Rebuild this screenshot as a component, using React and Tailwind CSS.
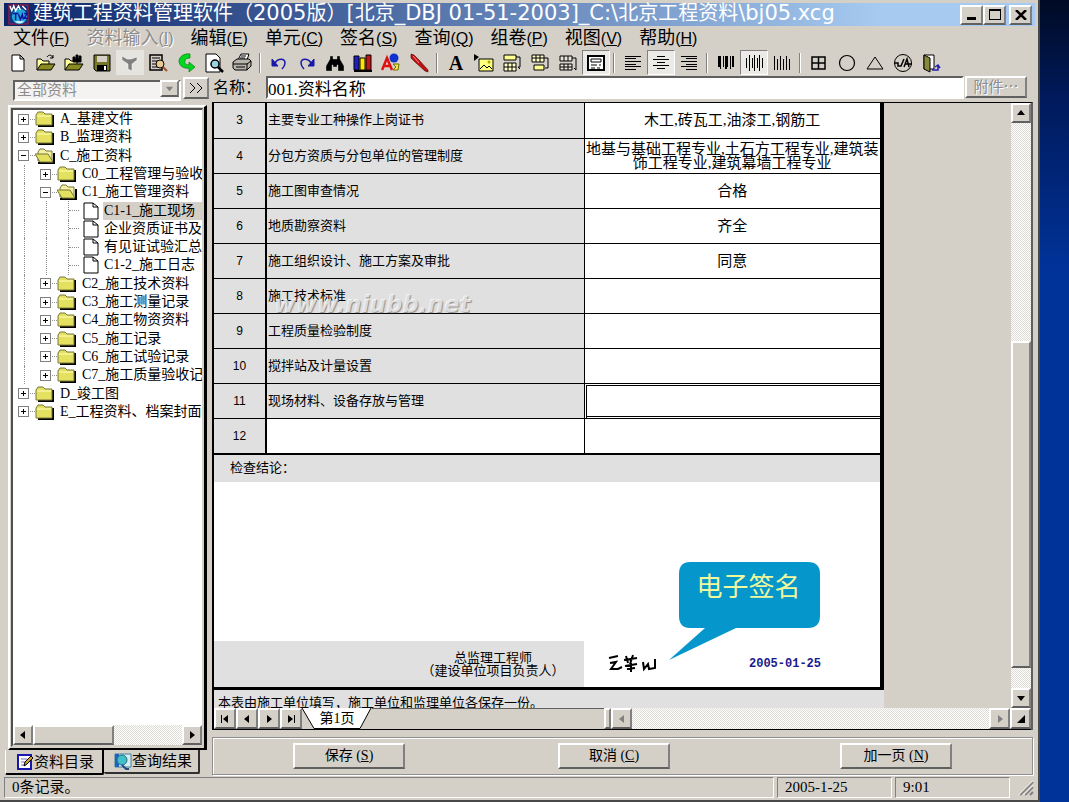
import React, { useState } from "react";
import clsx from "clsx";

const raised =
  "border-2 border-t-white border-l-white border-r-[#808080] border-b-[#606060] bg-[#d4d0c8]";
const track =
  "bg-[repeating-conic-gradient(#ffffff_0_25%,#dedbd4_0_50%)] bg-[length:2px_2px]";

const menus = [
  { label: "文件", mnemonic: "F" },
  { label: "资料输入", mnemonic: "I", disabled: true },
  { label: "编辑", mnemonic: "E" },
  { label: "单元", mnemonic: "C" },
  { label: "签名", mnemonic: "S" },
  { label: "查询", mnemonic: "Q" },
  { label: "组卷", mnemonic: "P" },
  { label: "视图", mnemonic: "V" },
  { label: "帮助", mnemonic: "H" },
];

const bars = (x, y, w, h) => <rect key={`${x}-${y}`} x={x} y={y} width={w} height={h} fill="#000" />;

const icons = {
  new: <path d="M4 2h8l4 4v12H4zM12 2v4h4" fill="#fff" stroke="#000" />,
  open: (
    <g stroke="#000">
      <path d="M1 17V6h4l2 2h6v3" fill="#ffff9c" />
      <path d="M1 17l4-6h14l-4 6z" fill="#8a8a22" />
      <path d="M11 4c2-3 5-2 6 1M17 2v3h-3" fill="none" />
    </g>
  ),
  openFind: (
    <g stroke="#000">
      <path d="M1 17V6h4l2 2h6v3" fill="#ffff9c" />
      <path d="M1 17l4-6h14l-4 6z" fill="#8a8a22" />
      <path d="M9 9V4h2v2h1V2h2v4h1V3h2v6z" fill="#000" />
    </g>
  ),
  save: (
    <g>
      <path d="M2 2h16v16H4l-2-2z" fill="#77772a" stroke="#000" />
      <path d="M5 3h10v6H5z" fill="#d4d0c8" />
      <path d="M5 12h10v6H5z" fill="#000" />
      <path d="M12 13h2v4h-2z" fill="#fff" />
    </g>
  ),
  filter: <path d="M2 3l5 3h4l6-2v3l-5 4v7l-4-2v-5L2 7z" fill="#808080" stroke="#fff" strokeWidth="0.5" />,
  preview: (
    <g>
      <path d="M2 2h12v15H2z" fill="#d4d0c8" stroke="#000" strokeWidth="1.500" />
      <path d="M4 5h8M4 8h6M4 11h5M4 14h6" stroke="#000" />
      <circle cx="12" cy="11" r="4" fill="#e8c890" stroke="#000" />
      <path d="M15 14l4 4" stroke="#a05020" strokeWidth="2" />
    </g>
  ),
  refresh: (
    <path
      d="M14 1C8 0 3 4 3 8c0 5 5 8 10 7v4l6-5-6-5v3c-3 0-5-2-4-4 0-2 2-3 5-3z"
      fill="#00d820"
      stroke="#067a10"
      strokeWidth="0.7"
    />
  ),
  printPreview: (
    <g>
      <path d="M2 1h10l4 4v14H2z" fill="#fff" stroke="#000" />
      <circle cx="11" cy="11" r="4" fill="#9ad4e0" stroke="#000" strokeWidth="1.5" />
      <path d="M14 14l5 5" stroke="#000" strokeWidth="2.5" />
    </g>
  ),
  print: (
    <g stroke="#000">
      <path d="M6 7l3-6h8l-2 6z" fill="#fff" />
      <path d="M1 9l4-3h12l2 2v5l-4 4H3l-2-2z" fill="#b8b4ac" />
      <path d="M1 11h14l4-3M4 14h9M15 11v6M9 3h5M8 5h5" fill="none" />
    </g>
  ),
  undo: (
    <g>
      <path d="M3 6v7h6z" fill="#1818a8" stroke="#1818a8" />
      <path d="M6 10c3-5 10-5 10 0 0 3-2 5-3 6" fill="none" stroke="#1818a8" strokeWidth="1.5" />
    </g>
  ),
  redo: (
    <g>
      <path d="M17 6v7h-6z" fill="#1818a8" stroke="#1818a8" />
      <path d="M14 10C11 5 4 5 4 10c0 3 2 5 3 6" fill="none" stroke="#1818a8" strokeWidth="1.5" />
    </g>
  ),
  find: <path d="M5 3h3v3h4V3h3v3l4 7v5h-6v-6h-1v2H8v-2H7v6H1v-5l4-7z" fill="#000" stroke="#d4d0c8" strokeWidth="0.4" />,
  books: (
    <g stroke="#000">
      <path d="M1 3h5v14H1z" fill="#2020c0" />
      <path d="M7 5h5v12H7z" fill="#ffe800" />
      <path d="M13 2h5v15h-5z" fill="#c01818" />
      <path d="M1 18h18" strokeWidth="2" />
    </g>
  ),
  shapes: (
    <g>
      <circle cx="13" cy="5" r="4.5" fill="#1030d0" />
      <path d="M1 17L6 5l5 12M3 13h6" fill="none" stroke="#e01010" strokeWidth="2.5" />
      <path d="M12 11h6l-1 6h-5l3-3z" fill="#f0e850" stroke="#707000" />
    </g>
  ),
  pen: (
    <g>
      <path d="M2 1l3 1 5 5 9 10v2l-3-1L6 9 2 5z" fill="#c01010" stroke="#500" strokeWidth="0.6" />
      <path d="M4 3l6 7" stroke="#ff9090" />
    </g>
  ),
  picture: (
    <g>
      <path d="M0 1v7l5-4z" fill="#000" />
      <path d="M5 6h14v12H5z" fill="#ffff80" stroke="#000" />
      <path d="M6 16l4-4 3 3 2-2 3 3" fill="none" stroke="#000" />
      <circle cx="15" cy="9" r="1.5" fill="#b8a000" />
    </g>
  ),
  rowInsert: (
    <g stroke="#000">
      <path d="M2 2h12v5H2z" fill="#ffff90" />
      <path d="M2 10h12v8H2zM2 14h12M6 10v8M10 10v8" fill="#ffffc8" />
      <path d="M14 4h4v10h-2l2 2" fill="none" />
    </g>
  ),
  rowAppend: (
    <g stroke="#000">
      <path d="M2 2h12v7H2zM2 5h12M6 2v7M10 2v7" fill="#ffffc8" />
      <path d="M4 12h10v5H4z" fill="#ffff90" />
      <path d="M14 5h4v10h-3" fill="none" />
    </g>
  ),
  rowDelete: (
    <g stroke="#000">
      <path d="M2 3h12v5H2zM6 3v5M10 3v5M2 11h12v6H2zM6 11v6M10 11v6M2 14h12" fill="#e8e4dc" />
      <path d="M14 5h4v12l-2-2" fill="none" />
    </g>
  ),
  form: (
    <g>
      <path d="M2 3h16v14H2z" fill="#fff" stroke="#000" strokeWidth="2" />
      <path d="M5 6h10v3H5zM5 12h6M13 12h2M5 15h4M11 15h3" fill="none" stroke="#000" />
    </g>
  ),
  left: <g>{[3, 5, 8, 11, 13, 16].map((y, i) => bars(2, y, i % 2 ? 11 : 16, 1))}</g>,
  center: <g>{[3, 6, 9, 12, 15].map((y, i) => bars(i % 2 ? 2 : 6, y, i % 2 ? 16 : 8, 1))}</g>,
  right: <g>{[3, 5, 8, 11, 13, 16].map((y, i) => bars(i % 2 ? 7 : 2, y, i % 2 ? 11 : 16, 1))}</g>,
  barTop: <g>{[2, 4, 7, 9, 11, 14, 16].map((x, i) => bars(x, 3, i % 3 ? 1 : 2, i % 2 ? 13 : 11))}</g>,
  barMiddle: <g>{[2, 5, 8, 10, 13, 15, 18].map((x, i) => bars(x, i % 2 ? 2 : 5, 1, i % 2 ? 16 : 10))}</g>,
  barBottom: <g>{[2, 5, 8, 11, 14, 17].map((x, i) => bars(x, i % 2 ? 6 : 3, 1, i % 2 ? 11 : 14))}</g>,
  grid: <path d="M3 4h13v12H3zM3 10h13M9.500 4v12" fill="none" stroke="#000" strokeWidth="1.500" />,
  circle: <circle cx="10" cy="10" r="7.500" fill="none" stroke="#000" strokeWidth="1.200" />,
  triangle: <path d="M10 4l8 12H2z" fill="none" stroke="#000" />,
  signal: (
    <g fill="none" stroke="#000">
      <circle cx="10" cy="10" r="8.500" />
      <path d="M1 10h4v3h3l3-7M11 14l3-8 2 8M12 11h7" strokeWidth="1.500" />
    </g>
  ),
  exit: (
    <g>
      <path d="M3 2h10v14H3z" fill="#fff" stroke="#000" />
      <path d="M3 2l6 3v14l-6-3z" fill="#88883a" stroke="#000" />
      <path d="M11 17h6v-4M14 14l3-2 2 3" fill="none" stroke="#2020b0" strokeWidth="1.500" />
    </g>
  ),
};

const toolGroups = [
  [
    ["new", "新建"],
    ["open", "打开"],
    ["openFind", "查找文件"],
    ["save", "存盘"],
    ["filter", "筛选", "disabled"],
    ["preview", "查看"],
    ["refresh", "刷新"],
    ["printPreview", "打印预览"],
    ["print", "打印"],
  ],
  [
    ["undo", "撤消"],
    ["redo", "重做"],
    ["find", "查找"],
    ["books", "资料库"],
    ["shapes", "图形"],
    ["pen", "画笔"],
  ],
  [
    ["font", "字体"],
    ["picture", "图片"],
    ["rowInsert", "插入行"],
    ["rowAppend", "追加行"],
    ["rowDelete", "删除行"],
    ["form", "表格", "pressed"],
  ],
  [
    ["left", "左对齐"],
    ["center", "居中", "pressed"],
    ["right", "右对齐"],
  ],
  [
    ["barTop", "上对齐"],
    ["barMiddle", "垂直居中", "pressed"],
    ["barBottom", "下对齐"],
  ],
  [
    ["grid", "边框"],
    ["circle", "圆"],
    ["triangle", "三角"],
    ["signal", "符号"],
    ["exit", "退出"],
  ],
];

const treeItems = [
  { level: 0, icon: "folder", sign: "+", text: "A_基建文件" },
  { level: 0, icon: "folder", sign: "+", text: "B_监理资料" },
  { level: 0, icon: "opened", sign: "-", text: "C_施工资料" },
  { level: 1, icon: "folder", sign: "+", text: "C0_工程管理与验收" },
  { level: 1, icon: "opened", sign: "-", text: "C1_施工管理资料" },
  { level: 2, icon: "file", text: "C1-1_施工现场" },
  { level: 2, icon: "file", text: "企业资质证书及" },
  { level: 2, icon: "file", text: "有见证试验汇总" },
  { level: 2, icon: "file", text: "C1-2_施工日志" },
  { level: 1, icon: "folder", sign: "+", text: "C2_施工技术资料" },
  { level: 1, icon: "folder", sign: "+", text: "C3_施工测量记录" },
  { level: 1, icon: "folder", sign: "+", text: "C4_施工物资资料" },
  { level: 1, icon: "folder", sign: "+", text: "C5_施工记录" },
  { level: 1, icon: "folder", sign: "+", text: "C6_施工试验记录" },
  { level: 1, icon: "folder", sign: "+", text: "C7_施工质量验收记" },
  { level: 0, icon: "folder", sign: "+", text: "D_竣工图" },
  { level: 0, icon: "folder", sign: "+", text: "E_工程资料、档案封面" },
];

const rows = [
  { no: 3, name: "主要专业工种操作上岗证书", value: ["木工,砖瓦工,油漆工,钢筋工"] },
  {
    no: 4,
    name: "分包方资质与分包单位的管理制度",
    value: ["地基与基础工程专业,土石方工程专业,建筑装", "饰工程专业,建筑幕墙工程专业"],
  },
  { no: 5, name: "施工图审查情况", value: ["合格"] },
  { no: 6, name: "地质勘察资料", value: ["齐全"] },
  { no: 7, name: "施工组织设计、施工方案及审批", value: ["同意"] },
  { no: 8, name: "施工技术标准", value: [] },
  { no: 9, name: "工程质量检验制度", value: [] },
  { no: 10, name: "搅拌站及计量设置", value: [] },
  { no: 11, name: "现场材料、设备存放与管理", value: [] },
  { no: 12, name: "", value: [] },
];

const arrowPaths = {
  up: "M5 2l4 5H1z",
  down: "M1 3h8L5 8z",
  left: "M7 1v8L2 5z",
  right: "M3 1v8l5-4z",
  first: "M8 1v8L3 5zM1 1h1v8H1z",
  last: "M2 1v8l5-4zM8 1h1v8H8z",
  corner: "M9 1v8H1z",
};

const ArrowButton = ({ dir, label, className, disabled }) => (
  <button
    aria-label={label}
    disabled={disabled}
    className={clsx(raised, "flex items-center justify-center shrink-0", className)}
  >
    <svg viewBox="0 0 10 10" className={clsx("w-[10px] h-[10px]", disabled ? "fill-[#808080]" : "fill-black")}>
      <path d={arrowPaths[dir]} />
    </svg>
  </button>
);

const TitleBar = () => (
  <div className="flex items-center h-[23px] pl-1 pr-[3px] bg-[linear-gradient(to_right,#0a246a,#a6caf0_85%)]">
    <svg viewBox="0 0 22 22" className="w-[21px] h-[21px] shrink-0">
      <rect x="1" y="1" width="20" height="20" fill="#18307c" stroke="#c01830" />
      <circle cx="12" cy="13" r="8" fill="#20a8d8" />
      <path d="M2 2l2 5 2-5 2 5 3-5 2 4M15 2l4 4" fill="none" stroke="#fff" strokeWidth="1.500" />
      <path d="M5 10h6M8 10v7M11 11l2 5 2-5 1 5M17 10h3l-3 5h4" fill="none" stroke="#1010a0" strokeWidth="1.500" />
      <path d="M7 18c3 3 7 3 10 0z" fill="#e0f8ff" />
    </svg>
    <h1 className="flex-1 min-w-0 self-start pl-1 whitespace-nowrap overflow-x-clip text-white text-[20px] leading-[21px] font-['DejaVu_Sans','Noto_Sans_CJK_SC',sans-serif]">
      建筑工程资料管理软件（<span className="text-[21px]">2005</span>版）
      <span className="text-[21px]">[</span>北京
      <span className="text-[21px]">_DBJ 01-51-2003]_C:\</span>北京工程资料
      <span className="text-[21px]">\bj05.xcg</span>
    </h1>
    <div className="flex shrink-0">
      <button aria-label="最小化" className={clsx(raised, "w-[23px] h-[20px] flex items-end justify-center pb-[3px]")}>
        <span className="w-[9px] h-[3px] bg-black" />
      </button>
      <button aria-label="最大化" className={clsx(raised, "w-[23px] h-[20px] flex items-center justify-center")}>
        <span className="w-[12px] h-[11px] border border-t-2 border-black" />
      </button>
      <button aria-label="关闭" className={clsx(raised, "w-[23px] h-[20px] ml-[3px] flex items-center justify-center")}>
        <svg viewBox="0 0 12 10" className="w-[12px] h-[10px]">
          <path d="M1 0l10 10M11 0L1 10" stroke="#000" strokeWidth="2.500" />
        </svg>
      </button>
    </div>
  </div>
);

const MenuBar = () => (
  <nav className="flex items-center gap-[17px] h-[24px] pl-[9px]">
    {menus.map((m) => (
      <button
        key={m.mnemonic + m.label}
        disabled={m.disabled}
        className={clsx(
          "text-[18px] leading-[22px] whitespace-nowrap",
          m.disabled && "text-[#8c8c8c] [text-shadow:1px_1px_0_#fff]"
        )}
      >
        {m.label}
        <span className="text-[16px]">
          (<u>{m.mnemonic}</u>)
        </span>
      </button>
    ))}
  </nav>
);

const ToolBar = () => (
  <div className="flex items-center h-[25px]">
    {toolGroups.map((group, i) => (
      <div key={i} className="flex items-center">
        {i > 0 && <span className="w-[2px] h-[20px] ml-[3px] mr-1 bg-[#808080] border-r border-white" />}
        {group.map(([name, label, state]) => (
          <button
            key={name}
            title={label}
            aria-label={label}
            disabled={state === "disabled"}
            className={clsx(
              "w-[28px] h-[25px] flex items-center justify-center",
              state === "pressed" && "border border-t-[#808080] border-l-[#808080] border-r-white border-b-white bg-[#eceae6]",
              state === "disabled" && "bg-[#e6e4de]"
            )}
          >
            {name === "font" ? (
              <b className="text-[20px] leading-[20px] font-['Liberation_Serif',serif]">A</b>
            ) : (
              <svg viewBox="0 0 20 20" className="w-[20px] h-[20px]">
                {icons[name]}
              </svg>
            )}
          </button>
        ))}
      </div>
    ))}
  </div>
);

const NameRow = () => {
  const [name, setName] = useState("001.资料名称");
  return (
    <div className="flex items-start h-[27px] pt-px pl-[9px] pr-2 font-['Liberation_Serif','Noto_Sans_CJK_SC',sans-serif]">
      <div className="relative w-[168px] h-[21px] mt-[2px] shrink-0">
        <select
          aria-label="资料分类"
          disabled
          className="w-full h-full pl-[2px] appearance-none border-2 border-t-[#606060] border-l-[#606060] border-r-white border-b-white bg-[#f4f3f1] text-[#8c8c8c] text-[15px] leading-[17px] opacity-100"
        >
          <option>全部资料</option>
        </select>
        <span className={clsx(raised, "absolute right-[2px] top-[2px] w-[19px] h-[17px] flex items-center justify-center pointer-events-none")}>
          <svg viewBox="0 0 10 10" className="w-[9px] h-[9px] fill-[#808080]">
            <path d={arrowPaths.down} />
          </svg>
        </span>
      </div>
      <button aria-label="展开" className={clsx(raised, "w-[26px] h-[22px] mt-px ml-[2px] flex items-center justify-center shrink-0")}>
        <svg viewBox="0 0 14 12" className="w-[14px] h-[12px]">
          <path d="M1 1l5 5-5 5M8 1l5 5-5 5" fill="none" stroke="#000" />
        </svg>
      </button>
      <label htmlFor="doc-name" className="w-[57px] pl-1 shrink-0 text-[16px] leading-[24px] whitespace-nowrap">
        名称：
      </label>
      <input
        id="doc-name"
        value={name}
        onChange={(e) => setName(e.target.value)}
        className="flex-1 min-w-0 h-[23px] border-2 border-t-[#606060] border-l-[#606060] border-r-white border-b-white bg-white text-[17px] leading-[19px] outline-none"
      />
      <button disabled className={clsx(raised, "w-[62px] h-[22px] ml-px shrink-0 text-[15px] leading-[16px] text-[#8c8c8c] [text-shadow:1px_1px_0_#fff]")}>
        附件⋯
      </button>
    </div>
  );
};

const TreeIcon = ({ type }) => (
  <svg viewBox="0 0 20 18" className="w-[20px] h-[18px] shrink-0">
    {type === "folder" && (
      <g>
        <path d="M3 16h15V5" fill="none" stroke="#000" strokeWidth="2" />
        <path d="M1 15V5l2-3h5l2 2h7v11z" fill="#e4e060" stroke="#77773c" />
        <path d="M2 6h14" stroke="#ffffc0" />
      </g>
    )}
    {type === "opened" && (
      <g>
        <path d="M3 16h16V6" fill="none" stroke="#000" strokeWidth="2" />
        <path d="M3 14V5l2-3h4l2 2h6v11z" fill="#f4f0a0" stroke="#77773c" />
        <path d="M0 7h13l5 8H5z" fill="#e4e060" stroke="#77773c" />
      </g>
    )}
    {type === "file" && (
      <path d="M5 1h9l5 4v12H5zM14 1v4h5" fill="#fff" stroke="#000" />
    )}
  </svg>
);

const TreeRow = ({ item, selected }) => (
  <li className="flex items-center min-h-0">
    {Array.from({ length: item.level }).map((_, i) => (
      <span key={i} className="w-[22px] h-full flex justify-center shrink-0">
        <span className="h-full border-l border-dotted border-[#909090]" />
      </span>
    ))}
    {item.sign ? (
      <button aria-label={item.sign === "+" ? "展开" : "折叠"} className="w-[22px] flex justify-center shrink-0">
        <svg viewBox="0 0 22 11" className="w-[22px] h-[11px]">
          <path d="M17 5.500h5" stroke="#909090" strokeDasharray="1 1" />
          <rect x="5.500" y="0.500" width="10" height="10" fill="#fff" stroke="#808080" />
          <path d="M8 5.500h5" stroke="#000" />
          {item.sign === "+" && <path d="M10.500 3v5" stroke="#000" />}
        </svg>
      </button>
    ) : (
      <span className="w-[22px] h-full pl-[11px] shrink-0">
        <span className="flex items-center h-full border-l border-dotted border-[#909090]">
          <span className="w-full border-t border-dotted border-[#909090]" />
        </span>
      </span>
    )}
    <TreeIcon type={item.icon} />
    <span
      className={clsx(
        "ml-1 pl-px flex-1 text-[14px] leading-[18px] whitespace-nowrap",
        selected && "bg-[#d4d0c8]"
      )}
    >
      {item.text}
    </span>
  </li>
);

const Sidebar = () => (
  <aside className="w-[203px] shrink-0 flex flex-col pt-[3px] font-['Liberation_Serif','Noto_Sans_CJK_SC',sans-serif]">
    <div className="flex-1 flex flex-col ml-1 p-px border-t-2 border-l-2 border-t-white border-l-white border-r-[3px] border-b-2 border-r-black border-b-black">
      <div className="flex-1 flex flex-col border-2 border-r border-t-[#505050] border-l-[#505050] border-r-[#d4d0c8] border-b-[#d4d0c8] bg-white overflow-hidden">
        <ul className="grid auto-rows-fr h-[311px] overflow-hidden">
          {treeItems.map((item, i) => (
            <TreeRow key={item.text} item={item} selected={i === 5} />
          ))}
        </ul>
        <div className={clsx("flex h-[20px] mt-auto", track)}>
          <ArrowButton dir="left" label="向左滚动" className="w-[20px]" />
          <span className={clsx(raised, "w-[81px]")} />
          <ArrowButton dir="right" label="向右滚动" className="w-[20px] ml-auto" />
        </div>
      </div>
    </div>
    <div className="flex h-[26px] text-[15px] leading-[20px] pl-px">
      <button className="w-[99px] h-[25px] pl-[2px] flex items-center justify-center border-l border-l-white border-r-2 border-b-2 border-r-black border-b-black rounded-b-[2px]">
        <svg viewBox="0 0 18 18" className="w-[18px] h-[18px] shrink-0">
          <path d="M2 2h13v14H2z" fill="#fff" stroke="#1818b0" strokeWidth="2" />
          <path d="M5 6h6M5 9h4M5 12h5" stroke="#7070b0" />
          <path d="M8 13l1-4 6-6 2 2-6 6z" fill="#d0a030" stroke="#000" />
        </svg>
        资料目录
      </button>
      <button className="w-[96px] h-[24px] pl-1 flex items-center justify-center border-r-2 border-b-2 border-r-[#303030] border-b-[#303030] rounded-b-[2px]">
        <svg viewBox="0 0 18 18" className="w-[18px] h-[18px] shrink-0">
          <path d="M1 2h16v13H1z" fill="#d8ecf4" stroke="#4080a0" />
          <path d="M1 2h4v13H1z" fill="#2060c0" />
          <circle cx="8" cy="8" r="5" fill="#40c0c8" stroke="#207080" />
          <path d="M8 13l4 4h3" stroke="#205080" fill="none" strokeWidth="2" />
        </svg>
        查询结果
      </button>
    </div>
  </aside>
);

const Sheet = () => (
  <div className="flex-1 min-w-0 flex flex-col">
    <div className="flex-1 flex flex-col border-r-[4px] border-b-[3px] border-black bg-white">
      <table className="w-full table-fixed border-collapse text-[13px] leading-[16px]">
        <colgroup>
          <col className="w-[52px]" />
          <col className="w-[318px]" />
          <col />
        </colgroup>
        <tbody>
          {rows.map((row) => (
            <tr key={row.no} className="h-[35px] border-b border-black">
              <td className="border-r-2 border-black bg-[#e0e0e0] text-center text-[12px]">{row.no}</td>
              <td className={clsx("relative px-px border-r border-black", row.name && "bg-[#e0e0e0]")}>
                {row.name}
                {row.no === 8 && (
                  <span className="absolute left-[7px] top-[12px] text-[23px] leading-[26px] font-bold italic text-white/70 [text-shadow:1px_1px_1px_#909090] font-['DejaVu_Sans',sans-serif]">
                    www.niubb.net
                  </span>
                )}
              </td>
              <td
                className={clsx(
                  "text-center text-[15px] leading-[14px] whitespace-nowrap font-['Liberation_Serif','Noto_Sans_CJK_SC',sans-serif]",
                  row.no === 11 && "shadow-[inset_1px_1px_0_#fff,inset_2px_2px_0_#000,inset_0_-1px_0_#fff,inset_0_-2px_0_#000]"
                )}
              >
                {row.value.map((line) => (
                  <div key={line}>{line}</div>
                ))}
              </td>
            </tr>
          ))}
        </tbody>
      </table>

      {/* Conclusion */}
      <div className="h-[28px] pl-4 bg-[#e0e0e0] border-t border-black text-[13px] leading-[26px]">检查结论：</div>
      <div className="flex-1" />
      <div className="flex h-[46px]">
        <div className="w-[370px] shrink-0 flex flex-col justify-center bg-[#e0e0e0] pl-[188px] text-center text-[13px] leading-[13px] whitespace-nowrap">
          <div>总监理工程师</div>
          <div>（建设单位项目负责人）</div>
        </div>
        <div className="relative flex-1 flex items-center">
          <svg viewBox="0 0 52 22" className="w-[52px] h-[22px] ml-[23px]" aria-label="签名">
            <path
              d="M2 5l9-2M3 10l6-1 -5 7 7 0 4-2M17 7l13-2M19 3l2 7M26 2l-3 9M18 13l12-2M24 10v9M20 16l8-1M36 9l1 7 4-5 1 5 6-1V6"
              fill="none"
              stroke="#000"
              strokeWidth="2"
            />
          </svg>
          <span className="ml-[90px] text-[12px] font-bold text-[#1a1a8c] whitespace-nowrap font-['Liberation_Mono',monospace]">
            2005-01-25
          </span>
          <div className="absolute left-[84px] bottom-[26px] w-[154px] h-[101px]">
            <svg viewBox="0 0 154 101" className="absolute inset-0 w-full h-full">
              <path
                d="M22 2h118q12 0 12 12v42q0 12-12 12H68L1 100 37 68H22q-11 0-11-12V14Q11 2 22 2z"
                fill="#0597cb"
              />
            </svg>
            <div className="relative pl-[7px] pt-2 text-center text-[26px] leading-[38px] text-[#f0f89c]">电子签名</div>
          </div>
        </div>
      </div>
    </div>
    <div className="h-[18px] shrink-0 overflow-hidden bg-[#e0e0e0] pl-1 text-[13px] leading-[26px] whitespace-nowrap">
      本表由施工单位填写，施工单位和监理单位各保存一份。
    </div>
  </div>
);

const SheetTabs = () => (
  <div className="flex h-[22px] border-b border-black">
    <ArrowButton dir="first" label="第一页" className="w-[22px]" />
    <ArrowButton dir="left" label="上一页" className="w-[22px]" />
    <ArrowButton dir="right" label="下一页" className="w-[22px]" />
    <ArrowButton dir="last" label="最后一页" className="w-[22px]" />
    <button className="relative w-[70px] shrink-0 text-[14px] leading-[20px] font-['Liberation_Serif','Noto_Sans_CJK_SC',sans-serif]">
      <svg viewBox="0 0 70 21" className="absolute inset-0 w-full h-full">
        <path d="M0 0l12 20.500h46L69 0" fill="#fff" stroke="#000" />
      </svg>
      <span className="relative">第1页</span>
    </button>
    <span className="w-[232px] border-t border-[#606060]" />
    <span className={clsx(raised, "w-[7px]")} />
    <ArrowButton dir="left" label="向左滚动" className="w-[21px]" disabled />
    <span className={clsx("flex-1", track)} />
    <ArrowButton dir="right" label="向右滚动" className="w-[21px]" disabled />
    <ArrowButton dir="corner" label="调整大小" className="w-[21px]" />
  </div>
);

const ActionButton = ({ label, mnemonic }) => (
  <button className={clsx(raised, "w-[112px] h-[26px] shrink-0 text-[14px] leading-[20px]")}>
    {label} (<u>{mnemonic}</u>)
  </button>
);

const Document = () => (
  <main className="flex-1 min-w-0 flex flex-col ml-[5px] pr-[2px]">
    <div className="flex-1 flex flex-col border-t border-l-2 border-r-2 border-black border-r-[#606060]">
      <div className="flex-1 flex">
        <Sheet />
        <div className="w-[127px] shrink-0" />
        <div className={clsx("w-[20px] shrink-0 flex flex-col", track)}>
          <ArrowButton dir="up" label="向上滚动" className="h-[20px]" />
          <span className="flex-[220]" />
          <span className={clsx(raised, "flex-[326]")} />
          <span className="h-[20px]" />
          <ArrowButton dir="down" label="向下滚动" className="h-[20px]" />
        </div>
      </div>
      <SheetTabs />
    </div>

    {/* Actions */}
    <div className="mt-[7px] mb-px flex items-center h-[38px] px-[80px] border border-[#909090] shadow-[inset_1px_1px_0_#fff,1px_1px_0_#fff] font-['Liberation_Serif','Noto_Sans_CJK_SC',sans-serif]">
      <ActionButton label="保存" mnemonic="S" />
      <span className="flex-[9]" />
      <ActionButton label="取消" mnemonic="C" />
      <span className="flex-[10]" />
      <ActionButton label="加一页" mnemonic="N" />
    </div>
  </main>
);

const sunken = "border border-t-[#808080] border-l-[#808080] border-r-white border-b-white";

const StatusBar = () => (
  <footer className="flex gap-[3px] h-[21px] mt-px text-[15px] leading-[18px] whitespace-nowrap font-['Liberation_Serif','Noto_Sans_CJK_SC',sans-serif]">
    <div className={clsx(sunken, "flex-1 pl-[7px]")}>0条记录。</div>
    <div className={clsx(sunken, "w-[115px] pl-[7px]")}>2005-1-25</div>
    <div className={clsx(sunken, "w-[115px] pl-[7px]")}>9:01</div>
    <svg viewBox="0 0 22 20" className="w-[22px] h-[20px]">
      <path d="M7 18L20 5M12 18l8-8M17 18l3-3" stroke="#808080" strokeWidth="2" />
      <path d="M5.500 18L20 3.500M10.500 18L20 8.500" stroke="#fff" />
    </svg>
  </footer>
);

const App = () => (
  <div className="flex min-h-screen pr-[29px] bg-[linear-gradient(to_bottom,#000a24,#001a5c_100px,#003399_270px)] text-black font-['Liberation_Sans','Noto_Sans_CJK_SC',sans-serif]">
    <div className="flex-1 min-w-0 flex flex-col pt-[3px] pl-1 pr-[3px] pb-[2px] bg-[#d4d0c8] border-r-2 border-b-2 border-[#484848]">
      <TitleBar />
      <MenuBar />
      <ToolBar />
      <NameRow />
      <div className="flex-1 flex">
        <Sidebar />
        <Document />
      </div>
      <StatusBar />
    </div>
  </div>
);

export default App;
